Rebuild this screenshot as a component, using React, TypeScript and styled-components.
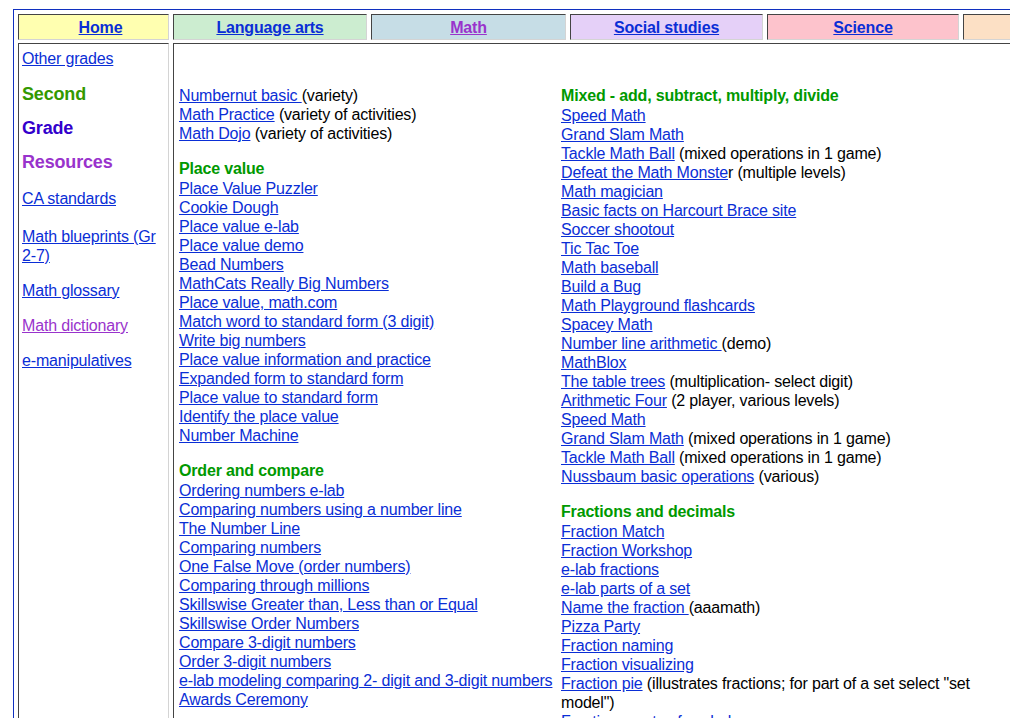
import styled, { createGlobalStyle } from 'styled-components';

const GlobalStyle = createGlobalStyle`
  html, body {
    margin: 0;
    padding: 0;
    overflow: hidden;
    background: white;
  }
  body {
    font-family: 'Liberation Sans', Arial, sans-serif;
    font-size: 16px;
    letter-spacing: -0.17px;
    color: #000;
  }
`;

const Page = styled.div`
  padding: 9px 0 0 13px;
`;

const Frame = styled.div`
  display: grid;
  grid-template-columns: 151px 194px 195px 193px 192px 193px;
  grid-template-rows: 26px auto;
  column-gap: 4px;
  row-gap: 3px;
  padding: 4px;
  width: max-content;
  border: 1px solid #1030c0;
`;

const Cell = styled.div`
  box-sizing: border-box;
  border: 1px solid;
  border-color: #444 #d4d4d4 #d4d4d4 #444;
`;

const NavCell = styled(Cell)<{ $bg: string; $shift?: number }>`
  display: flex;
  align-items: center;
  justify-content: center;
  padding-top: 2px;
  padding-left: ${({ $shift }) => $shift || 0}px;
  background: ${({ $bg }) => $bg};
  font-weight: bold;
`;

const Link = styled.a<{ $visited?: boolean }>`
  color: ${({ $visited }) => ($visited ? '#9933cc' : '#0a2ed6')};
  text-decoration: underline;
  cursor: pointer;
`;

const SideCell = styled(Cell)`
  display: flex;
  flex-direction: column;
  align-items: flex-start;
  padding: 5px 6px 20px 3px;
  height: 720px;
`;

const SideLink = styled.div<{ $gap: number }>`
  line-height: 19px;
  margin-top: ${({ $gap }) => $gap}px;
`;

const SideHeading = styled.div<{ $color: string; $gap: number }>`
  font-size: 18px;
  font-weight: bold;
  line-height: 21px;
  color: ${({ $color }) => $color};
  margin-top: ${({ $gap }) => $gap}px;
`;

const MainCell = styled(Cell)`
  grid-column: 2 / -1;
  display: grid;
  grid-template-columns: 382px 415px;
  align-items: start;
  padding: 42px 5px 20px 5px;
`;

const Column = styled.div`
  display: flex;
  flex-direction: column;
`;

const Heading = styled.div<{ $first?: boolean }>`
  color: #009900;
  font-weight: bold;
  line-height: 20px;
  margin-top: ${({ $first }) => ($first ? 0 : 16)}px;
`;

const Line = styled.div`
  line-height: 19px;
`;

type Item = { link: string; rest?: string };
type Section = { title?: string; items: Item[] };

const leftSections: Section[] = [
  {
    items: [
      { link: 'Numbernut basic ', rest: '(variety)' },
      { link: 'Math Practice', rest: ' (variety of activities)' },
      { link: 'Math Dojo', rest: ' (variety of activities)' },
    ],
  },
  {
    title: 'Place value',
    items: [
      { link: 'Place Value Puzzler' },
      { link: 'Cookie Dough' },
      { link: 'Place value e-lab' },
      { link: 'Place value demo' },
      { link: 'Bead Numbers' },
      { link: 'MathCats Really Big Numbers' },
      { link: 'Place value, math.com' },
      { link: 'Match word to standard form (3 digit)' },
      { link: 'Write big numbers' },
      { link: 'Place value information and practice' },
      { link: 'Expanded form to standard form' },
      { link: 'Place value to standard form' },
      { link: 'Identify the place value' },
      { link: 'Number Machine' },
    ],
  },
  {
    title: 'Order and compare',
    items: [
      { link: 'Ordering numbers e-lab' },
      { link: 'Comparing numbers using a number line' },
      { link: 'The Number Line' },
      { link: 'Comparing numbers' },
      { link: 'One False Move (order numbers)' },
      { link: 'Comparing through millions' },
      { link: 'Skillswise Greater than, Less than or Equal' },
      { link: 'Skillswise Order Numbers' },
      { link: 'Compare 3-digit numbers' },
      { link: 'Order 3-digit numbers' },
      { link: 'e-lab modeling comparing 2- digit and 3-digit numbers' },
      { link: 'Awards Ceremony' },
    ],
  },
];

const rightSections: Section[] = [
  {
    title: 'Mixed - add, subtract, multiply, divide',
    items: [
      { link: 'Speed Math' },
      { link: 'Grand Slam Math' },
      { link: 'Tackle Math Ball', rest: ' (mixed operations in 1 game)' },
      { link: 'Defeat the Math Monste', rest: 'r (multiple levels)' },
      { link: 'Math magician' },
      { link: 'Basic facts on Harcourt Brace site' },
      { link: 'Soccer shootout' },
      { link: 'Tic Tac Toe' },
      { link: 'Math baseball' },
      { link: 'Build a Bug' },
      { link: 'Math Playground flashcards' },
      { link: 'Spacey Math' },
      { link: 'Number line arithmetic ', rest: '(demo)' },
      { link: 'MathBlox' },
      { link: 'The table trees', rest: ' (multiplication- select digit)' },
      { link: 'Arithmetic Four', rest: ' (2 player, various levels)' },
      { link: 'Speed Math' },
      { link: 'Grand Slam Math', rest: ' (mixed operations in 1 game)' },
      { link: 'Tackle Math Ball', rest: ' (mixed operations in 1 game)' },
      { link: 'Nussbaum basic operations', rest: ' (various)' },
    ],
  },
  {
    title: 'Fractions and decimals',
    items: [
      { link: 'Fraction Match' },
      { link: 'Fraction Workshop' },
      { link: 'e-lab fractions' },
      { link: 'e-lab parts of a set' },
      { link: 'Name the fraction ', rest: '(aaamath)' },
      { link: 'Pizza Party' },
      { link: 'Fraction naming' },
      { link: 'Fraction visualizing' },
      {
        link: 'Fraction pie',
        rest: ' (illustrates fractions; for part of a set select "set model")',
      },
      { link: 'Fractions parts of a whole' },
      { link: 'Comparing fractions' },
    ],
  },
];

const tabs = [
  { label: 'Home', bg: '#ffffb0', shift: 14 },
  { label: 'Language arts', bg: '#ccedd0' },
  { label: 'Math', bg: '#c6dde6', visited: true },
  { label: 'Social studies', bg: '#e5d0f8' },
  { label: 'Science', bg: '#fdc3cc' },
  { label: '', bg: '#fce0c5' },
];

const Sections = ({ sections }: { sections: Section[] }) => (
  <Column>
    {sections.map((section, i) => (
      <div key={i}>
        {section.title && <Heading $first={i === 0}>{section.title}</Heading>}
        {section.items.map((item, j) => (
          <Line key={j}>
            <Link>{item.link}</Link>
            {item.rest}
          </Line>
        ))}
      </div>
    ))}
  </Column>
);

export default function App() {
  return (
    <Page>
      <GlobalStyle />
      <Frame>
        {tabs.map((tab, i) => (
          <NavCell key={i} $bg={tab.bg} $shift={tab.shift}>
            {tab.label && <Link $visited={tab.visited}>{tab.label}</Link>}
          </NavCell>
        ))}
        <SideCell>
          <SideLink $gap={0}>
            <Link>Other grades</Link>
          </SideLink>
          <SideHeading $color="#339900" $gap={16}>
            Second
          </SideHeading>
          <SideHeading $color="#3300cc" $gap={13}>
            Grade
          </SideHeading>
          <SideHeading $color="#9933cc" $gap={13}>
            Resources
          </SideHeading>
          <SideLink $gap={16}>
            <Link>CA standards</Link>
          </SideLink>
          <SideLink $gap={19}>
            <Link>Math blueprints (Gr 2-7)</Link>
          </SideLink>
          <SideLink $gap={16}>
            <Link>Math glossary</Link>
          </SideLink>
          <SideLink $gap={16}>
            <Link $visited>Math dictionary</Link>
          </SideLink>
          <SideLink $gap={16}>
            <Link>e-manipulatives</Link>
          </SideLink>
        </SideCell>
        <MainCell>
          <Sections sections={leftSections} />
          <Sections sections={rightSections} />
        </MainCell>
      </Frame>
    </Page>
  );
}
